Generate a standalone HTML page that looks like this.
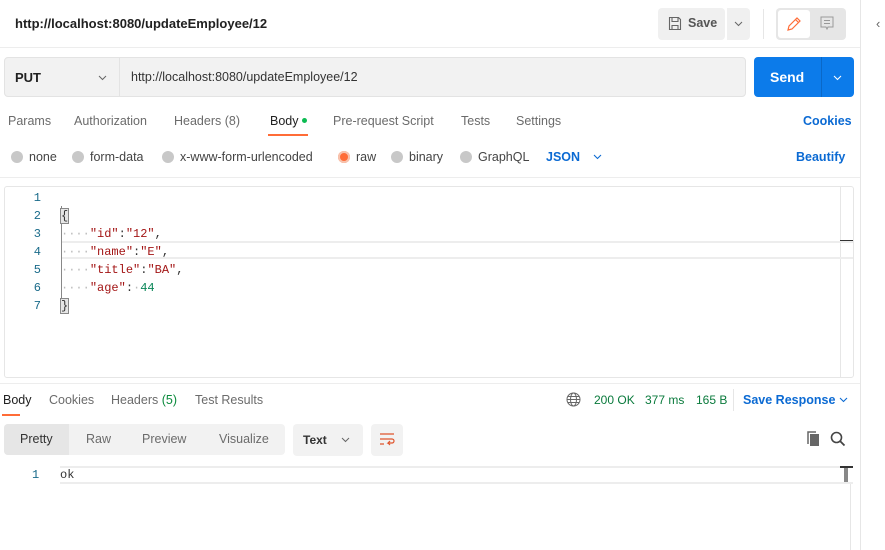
<!DOCTYPE html>
<html><head><style>
*{box-sizing:border-box;margin:0;padding:0}
body{width:885px;height:550px;background:#fff;font-family:"Liberation Sans",sans-serif;font-size:12.5px;color:#212121;position:relative;overflow:hidden}
.a{position:absolute;white-space:nowrap}
.g{color:#6b6b6b}
.mono{font-family:"Liberation Mono",monospace;font-size:12px}
.rad{display:inline-block;width:12px;height:12px;border-radius:50%;background:#c8c8c8;vertical-align:-2px;margin-right:6px}
</style></head><body>
<div class="a" style="left:860px;top:0;width:1px;height:550px;background:#e6e6e6"></div>
<div class="a" style="left:876px;top:16px;color:#666;font-size:13px">‹</div>
<div class="a" style="left:15px;top:16px;font-size:13px;font-weight:bold;color:#212121">http://localhost:8080/updateEmployee/12</div>
<div class="a" style="left:658px;top:8px;width:67px;height:32px;background:#f0f0f0;border-radius:4px"></div>
<svg class="a" style="left:668px;top:16px" width="14" height="15" viewBox="0 0 14 15"><path d="M1.5 1.5h9l2 2v10h-11z M4 1.5v4h6v-4 M4 13.5v-4h6v4" fill="none" stroke="#666" stroke-width="1.1"/></svg>
<div class="a" style="left:688px;top:16px;color:#555;font-weight:bold;font-size:12.5px">Save</div>
<div class="a" style="left:727px;top:8px;width:23px;height:32px;background:#f0f0f0;border-radius:0 4px 4px 0"></div>
<svg class="a" style="left:734px;top:21px" width="9" height="6" viewBox="0 0 9 6"><path d="M1 1l3.5 3.5L8 1" fill="none" stroke="#666" stroke-width="1"/></svg>
<div class="a" style="left:763px;top:9px;width:1px;height:30px;background:#e6e6e6"></div>
<div class="a" style="left:776px;top:8px;width:70px;height:32px;background:#e6e6e6;border-radius:4px"></div>
<div class="a" style="left:778px;top:10px;width:32px;height:28px;background:#fff;border-radius:3px"></div>
<svg class="a" style="left:786px;top:16px" width="16" height="16" viewBox="0 0 16 16"><path d="M2 14l1-4 8-8 3 3-8 8z M9.5 3.5l3 3" fill="none" stroke="#ff6c37" stroke-width="1.2"/></svg>
<svg class="a" style="left:820px;top:16px" width="14" height="15" viewBox="0 0 14 15"><path d="M1 1h12v10H8l-1 2-1-2H1z M4 4.5h6 M4 7.5h6" fill="none" stroke="#999" stroke-width="1"/></svg>
<div class="a" style="left:0;top:47px;width:860px;height:1px;background:#ededed"></div>
<div class="a" style="left:4px;top:57px;width:742px;height:40px;background:#f2f2f2;border:1px solid #e3e3e3;border-radius:4px"></div>
<div class="a" style="left:119px;top:58px;width:1px;height:38px;background:#e3e3e3"></div>
<div class="a" style="left:15px;top:70px;font-weight:bold;font-size:13px">PUT</div>
<svg class="a" style="left:98px;top:75px" width="9" height="6" viewBox="0 0 9 6"><path d="M1 1l3.5 3.5L8 1" fill="none" stroke="#666" stroke-width="1"/></svg>
<div class="a" style="left:131px;top:70px;font-size:12.5px;color:#333">http://localhost:8080/updateEmployee/12</div>
<div class="a" style="left:754px;top:57px;width:100px;height:40px;background:#0c7bea;border-radius:4px"></div>
<div class="a" style="left:821px;top:57px;width:1px;height:40px;background:#0a68c8"></div>
<div class="a" style="left:770px;top:69px;color:#fff;font-weight:bold;font-size:14px">Send</div>
<svg class="a" style="left:833px;top:75px" width="9" height="6" viewBox="0 0 9 6"><path d="M1 1l3.5 3.5L8 1" fill="none" stroke="#fff" stroke-width="1.1"/></svg>
<div class="a g" style="left:8px;top:114px">Params</div>
<div class="a g" style="left:74px;top:114px">Authorization</div>
<div class="a g" style="left:174px;top:114px">Headers (8)</div>
<div class="a" style="left:270px;top:114px;color:#212121">Body <span style="display:inline-block;width:5px;height:5px;border-radius:50%;background:#0cbb52;vertical-align:2px"></span></div>
<div class="a" style="left:268px;top:134px;width:40px;height:2px;background:#ff6c37"></div>
<div class="a g" style="left:333px;top:114px">Pre-request Script</div>
<div class="a g" style="left:461px;top:114px">Tests</div>
<div class="a g" style="left:516px;top:114px">Settings</div>
<div class="a" style="left:803px;top:114px;color:#0b6ad3;font-weight:bold;font-size:12.5px">Cookies</div>
<div class="a" style="left:11px;top:150px;color:#444"><span class="rad"></span>none</div>
<div class="a" style="left:72px;top:150px;color:#444"><span class="rad"></span>form-data</div>
<div class="a" style="left:162px;top:150px;color:#444"><span class="rad"></span>x-www-form-urlencoded</div>
<div class="a" style="left:338px;top:150px;color:#444"><span class="rad" style="background:#ff6c37;box-shadow:inset 0 0 0 2px #f7c3ae"></span>raw</div>
<div class="a" style="left:391px;top:150px;color:#444"><span class="rad"></span>binary</div>
<div class="a" style="left:460px;top:150px;color:#444"><span class="rad"></span>GraphQL</div>
<div class="a" style="left:546px;top:150px;color:#0b6ad3;font-weight:bold">JSON</div>
<svg class="a" style="left:593px;top:154px" width="9" height="6" viewBox="0 0 9 6"><path d="M1 1l3.5 3.5L8 1" fill="none" stroke="#0b6ad3" stroke-width="1.1"/></svg>
<div class="a" style="left:796px;top:150px;color:#0b6ad3;font-weight:bold">Beautify</div>
<div class="a" style="left:0;top:177px;width:860px;height:1px;background:#ededed"></div>
<div class="a" style="left:4px;top:186px;width:850px;height:192px;border:1px solid #e6e6e6;border-radius:3px"></div>
<div class="a" style="left:840px;top:187px;width:1px;height:190px;background:#e6e6e6"></div>
<div class="a" style="left:840px;top:240px;width:13px;height:2px;background:#333"></div>
<div class="a" style="left:62px;top:241px;width:791px;height:18px;border:2px solid #ededed;border-right:none;border-left:none"></div>
<div class="a" style="left:61px;top:206px;width:1px;height:106px;background:#888"></div>
<div class="mono a" style="left:32px;top:189px;line-height:18px;color:#1a6b8a;text-align:right;width:9px">1<br>2<br>3<br>4<br>5<br>6<br>7</div>
<div class="mono a" style="left:61px;top:189px;line-height:18px;color:#333"><br><span style="background:#e6e6e6;outline:1px solid #888">{</span><br><span style="color:#bbb">····</span><span style="color:#a31515">"id"</span>:<span style="color:#a31515">"12"</span>,<br><span style="color:#bbb">····</span><span style="color:#a31515">"name"</span>:<span style="color:#a31515">"E"</span>,<br><span style="color:#bbb">····</span><span style="color:#a31515">"title"</span>:<span style="color:#a31515">"BA"</span>,<br><span style="color:#bbb">····</span><span style="color:#a31515">"age"</span>:<span style="color:#bbb">·</span><span style="color:#098658">44</span><br><span style="background:#e6e6e6;outline:1px solid #888">}</span></div>
<div class="a" style="left:0;top:383px;width:860px;height:1px;background:#ededed"></div>
<div class="a" style="left:3px;top:393px">Body</div>
<div class="a" style="left:2px;top:414px;width:18px;height:2px;background:#ff6c37"></div>
<div class="a g" style="left:49px;top:393px">Cookies</div>
<div class="a g" style="left:111px;top:393px">Headers <span style="color:#0a8a3c">(5)</span></div>
<div class="a g" style="left:195px;top:393px">Test Results</div>
<svg class="a" style="left:566px;top:392px" width="15" height="15" viewBox="0 0 15 15"><g fill="none" stroke="#666" stroke-width="1"><circle cx="7.5" cy="7.5" r="6.5"/><ellipse cx="7.5" cy="7.5" rx="3" ry="6.5"/><path d="M1 7.5h13M2 4.5h11M2 10.5h11"/></g></svg>
<div class="a" style="left:594px;top:393px;color:#0a7a3c;font-size:12px">200 OK</div>
<div class="a" style="left:645px;top:393px;color:#0a7a3c;font-size:12px">377 ms</div>
<div class="a" style="left:696px;top:393px;color:#0a7a3c;font-size:12px">165 B</div>
<div class="a" style="left:733px;top:389px;width:1px;height:22px;background:#e6e6e6"></div>
<div class="a" style="left:743px;top:393px;color:#0b6ad3;font-weight:bold;font-size:12.5px">Save Response</div>
<svg class="a" style="left:839px;top:397px" width="9" height="6" viewBox="0 0 9 6"><path d="M1 1l3.5 3.5L8 1" fill="none" stroke="#0b6ad3" stroke-width="1.1"/></svg>
<div class="a" style="left:4px;top:424px;width:281px;height:31px;background:#f2f2f2;border-radius:4px"></div>
<div class="a" style="left:4px;top:424px;width:65px;height:31px;background:#e6e6e6;border-radius:4px 0 0 4px"></div>
<div class="a" style="left:20px;top:432px;color:#333">Pretty</div>
<div class="a g" style="left:86px;top:432px">Raw</div>
<div class="a g" style="left:142px;top:432px">Preview</div>
<div class="a g" style="left:219px;top:432px">Visualize</div>
<div class="a" style="left:293px;top:424px;width:70px;height:32px;background:#f2f2f2;border-radius:4px"></div>
<div class="a" style="left:303px;top:433px;color:#333;font-weight:bold;font-size:12px">Text</div>
<svg class="a" style="left:341px;top:437px" width="9" height="6" viewBox="0 0 9 6"><path d="M1 1l3.5 3.5L8 1" fill="none" stroke="#666" stroke-width="1"/></svg>
<div class="a" style="left:371px;top:424px;width:32px;height:32px;background:#f2f2f2;border-radius:4px"></div>
<svg class="a" style="left:378px;top:431px" width="18" height="18" viewBox="0 0 18 18"><g fill="none" stroke="#e0542c" stroke-width="1.2"><path d="M2 3h14M2 8h12a2 2 0 010 4h-4l2-2M10 12l2 2M2 13h4"/></g></svg>
<svg class="a" style="left:806px;top:431px" width="14" height="16" viewBox="0 0 14 16"><rect x="4" y="3" width="9" height="12" fill="#666"/><path d="M2 13V1h8" fill="none" stroke="#666" stroke-width="1.5"/></svg>
<svg class="a" style="left:830px;top:431px" width="16" height="16" viewBox="0 0 16 16"><circle cx="6.5" cy="6.5" r="5" fill="none" stroke="#444" stroke-width="1.6"/><path d="M10 10l4.5 4.5" stroke="#444" stroke-width="1.8"/></svg>
<div class="a" style="left:60px;top:466px;width:793px;height:18px;border:2px solid #ededed;border-left:none;border-right:none"></div>
<div class="a" style="left:840px;top:466px;width:13px;height:2px;background:#333"></div>
<div class="a" style="left:844px;top:468px;width:4px;height:14px;background:#888"></div>
<div class="a" style="left:850px;top:484px;width:1px;height:66px;background:#e6e6e6"></div>
<div class="mono a" style="left:32px;top:468px;color:#1a6b8a">1</div>
<div class="mono a" style="left:60px;top:468px;color:#333">ok</div>
</body></html>
